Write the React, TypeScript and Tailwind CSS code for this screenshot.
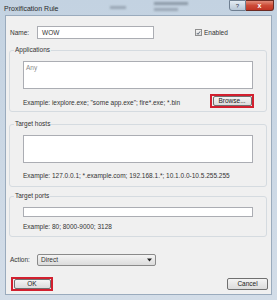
import React from "react";

const font = { fontFamily: '"Liberation Sans", Arial, sans-serif' };

function Btn({ label, cls }: { label: string; cls: string }) {
  return (
    <div
      className={`${cls} rounded-[2px] border border-[#707070] bg-gradient-to-b from-[#f4f4f4] to-[#dcdcdc] flex items-center justify-center text-[6.5px] leading-none text-[#222]`}
    >
      {label}
    </div>
  );
}

export default function App() {
  return (
    <div
      className="w-[277px] h-[300px] flex flex-col bg-gradient-to-b from-[#c3d2e1] to-[#d3dde8] overflow-hidden"
      style={font}
    >
      {/* title bar */}
      <div className="h-[15px] flex items-start pl-[4px] pr-[3px]">
        <div className="text-[7px] leading-none mt-[5px] text-[#2a2a2a]">Proxification Rule</div>
        <div className="flex-1 flex items-start">
          <span className="ml-[52px] mt-[6px] w-[16px] h-[3px] bg-[#9aa7b5] blur-[1px]" />
          <div className="ml-[28px] mt-[2px] flex flex-col gap-[3px]">
            <span className="w-[34px] h-[3px] bg-[#8d9aa8] blur-[1px]" />
            <span className="w-[24px] h-[3px] bg-[#9aa7b5] blur-[1px]" />
          </div>
        </div>
        <div className="flex">
          <div className="w-[17px] h-[11px] rounded-bl-[3px] border border-[#6f7f91] bg-gradient-to-b from-[#e3ebf3] to-[#b7c6d6] flex items-center justify-center text-[6px] text-[#33414f] leading-none">
            ?
          </div>
          <div className="w-[28px] h-[11px] rounded-br-[3px] border border-l-0 border-[#6b2a22] bg-gradient-to-b from-[#e08a78] via-[#cc4a36] to-[#c13424] flex items-center justify-center text-[7px] font-bold text-white leading-none">
            x
          </div>
        </div>
      </div>

      {/* client */}
      <div className="flex-1 mx-[5px] mb-[5px] border border-[#9aabbd] bg-[#f0f0f0] flex flex-col pt-[10px] text-[#333]">
        {/* name row */}
        <div className="h-[13px] flex items-center">
          <span className="ml-[4px] w-[27px] text-[6.5px]">Name:</span>
          <div className="w-[117px] h-[13px] border border-[#abadb3] bg-white flex items-center pl-[4px] text-[6.5px]">
            WOW
          </div>
          <div className="ml-[41px] w-[7px] h-[7px] border border-[#8f8f8f] bg-gradient-to-b from-[#f4f4f4] to-[#dedede] flex items-center justify-center">
            <svg width="6" height="6" viewBox="0 0 6 6">
              <path d="M1 3 L2.4 4.6 L5 1" stroke="#3a4a5c" strokeWidth="0.9" fill="none" />
            </svg>
          </div>
          <span className="ml-[2px] text-[6.5px]">Enabled</span>
        </div>

        {/* Applications */}
        <fieldset className="ml-[3px] mr-[4px] mt-[7px] border border-[#d5dbe0] rounded-[3px] px-[13px] pb-[3px]">
          <legend className="ml-[-9px] px-[1px] text-[6.5px] leading-[8px]">Applications</legend>
          <div className="mt-[7px] h-[28px] border border-[#abadb3] bg-white px-[2px] pt-[2px] text-[6.5px] leading-[8px] text-[#8a8a8a]">
            Any
          </div>
          <div className="mt-[5px] h-[14px] flex items-center justify-between">
            <span className="mt-[3px] text-[6.5px] leading-[8px]">
              Example: iexplore.exe; "some app.exe"; fire*.exe; *.bin
            </span>
            <div className="w-[44px] h-[14px] border-2 border-[#d2202f] flex items-center justify-center mr-[-1px]">
              <Btn label="Browse..." cls="w-[39px] h-[10px]" />
            </div>
          </div>
        </fieldset>

        {/* Target hosts */}
        <fieldset className="ml-[3px] mr-[4px] mt-[8px] border border-[#d5dbe0] rounded-[3px] px-[13px] pb-[6px]">
          <legend className="ml-[-9px] px-[1px] text-[6.5px] leading-[8px]">Target hosts</legend>
          <div className="mt-[7px] h-[28px] border border-[#abadb3] bg-white" />
          <div className="mt-[9px] text-[6.5px] leading-[8px]">
            Example: 127.0.0.1; *.example.com; 192.168.1.*; 10.1.0.0-10.5.255.255
          </div>
        </fieldset>

        {/* Target ports */}
        <fieldset className="ml-[3px] mr-[4px] mt-[5px] border border-[#d5dbe0] rounded-[3px] px-[13px] pb-[5px]">
          <legend className="ml-[-9px] px-[1px] text-[6.5px] leading-[8px]">Target ports</legend>
          <div className="mt-[7px] h-[10px] border border-[#abadb3] bg-white" />
          <div className="mt-[6px] text-[6.5px] leading-[8px]">Example: 80; 8000-9000; 3128</div>
        </fieldset>

        {/* Action */}
        <div className="mt-[17px] h-[12px] flex items-center">
          <span className="ml-[4px] w-[27px] text-[6.5px]">Action:</span>
          <div className="w-[119px] h-[12px] rounded-[2px] border border-[#8a8a8a] bg-gradient-to-b from-[#f4f4f4] to-[#dcdcdc] flex items-center justify-between pl-[3px] pr-[3px] text-[6.5px]">
            <span>Direct</span>
            <svg width="5" height="4" viewBox="0 0 5 4">
              <path d="M0 0.5 L5 0.5 L2.5 3.5 Z" fill="#222" />
            </svg>
          </div>
        </div>

        {/* buttons */}
        <div className="mt-[11px] flex items-center justify-between pl-[5px] pr-[3px]">
          <div className="w-[42px] h-[14px] border-2 border-[#d2202f] flex items-center justify-center">
            <Btn label="OK" cls="w-[37px] h-[10px]" />
          </div>
          <Btn label="Cancel" cls="w-[41px] h-[12px]" />
        </div>
      </div>
    </div>
  );
}
